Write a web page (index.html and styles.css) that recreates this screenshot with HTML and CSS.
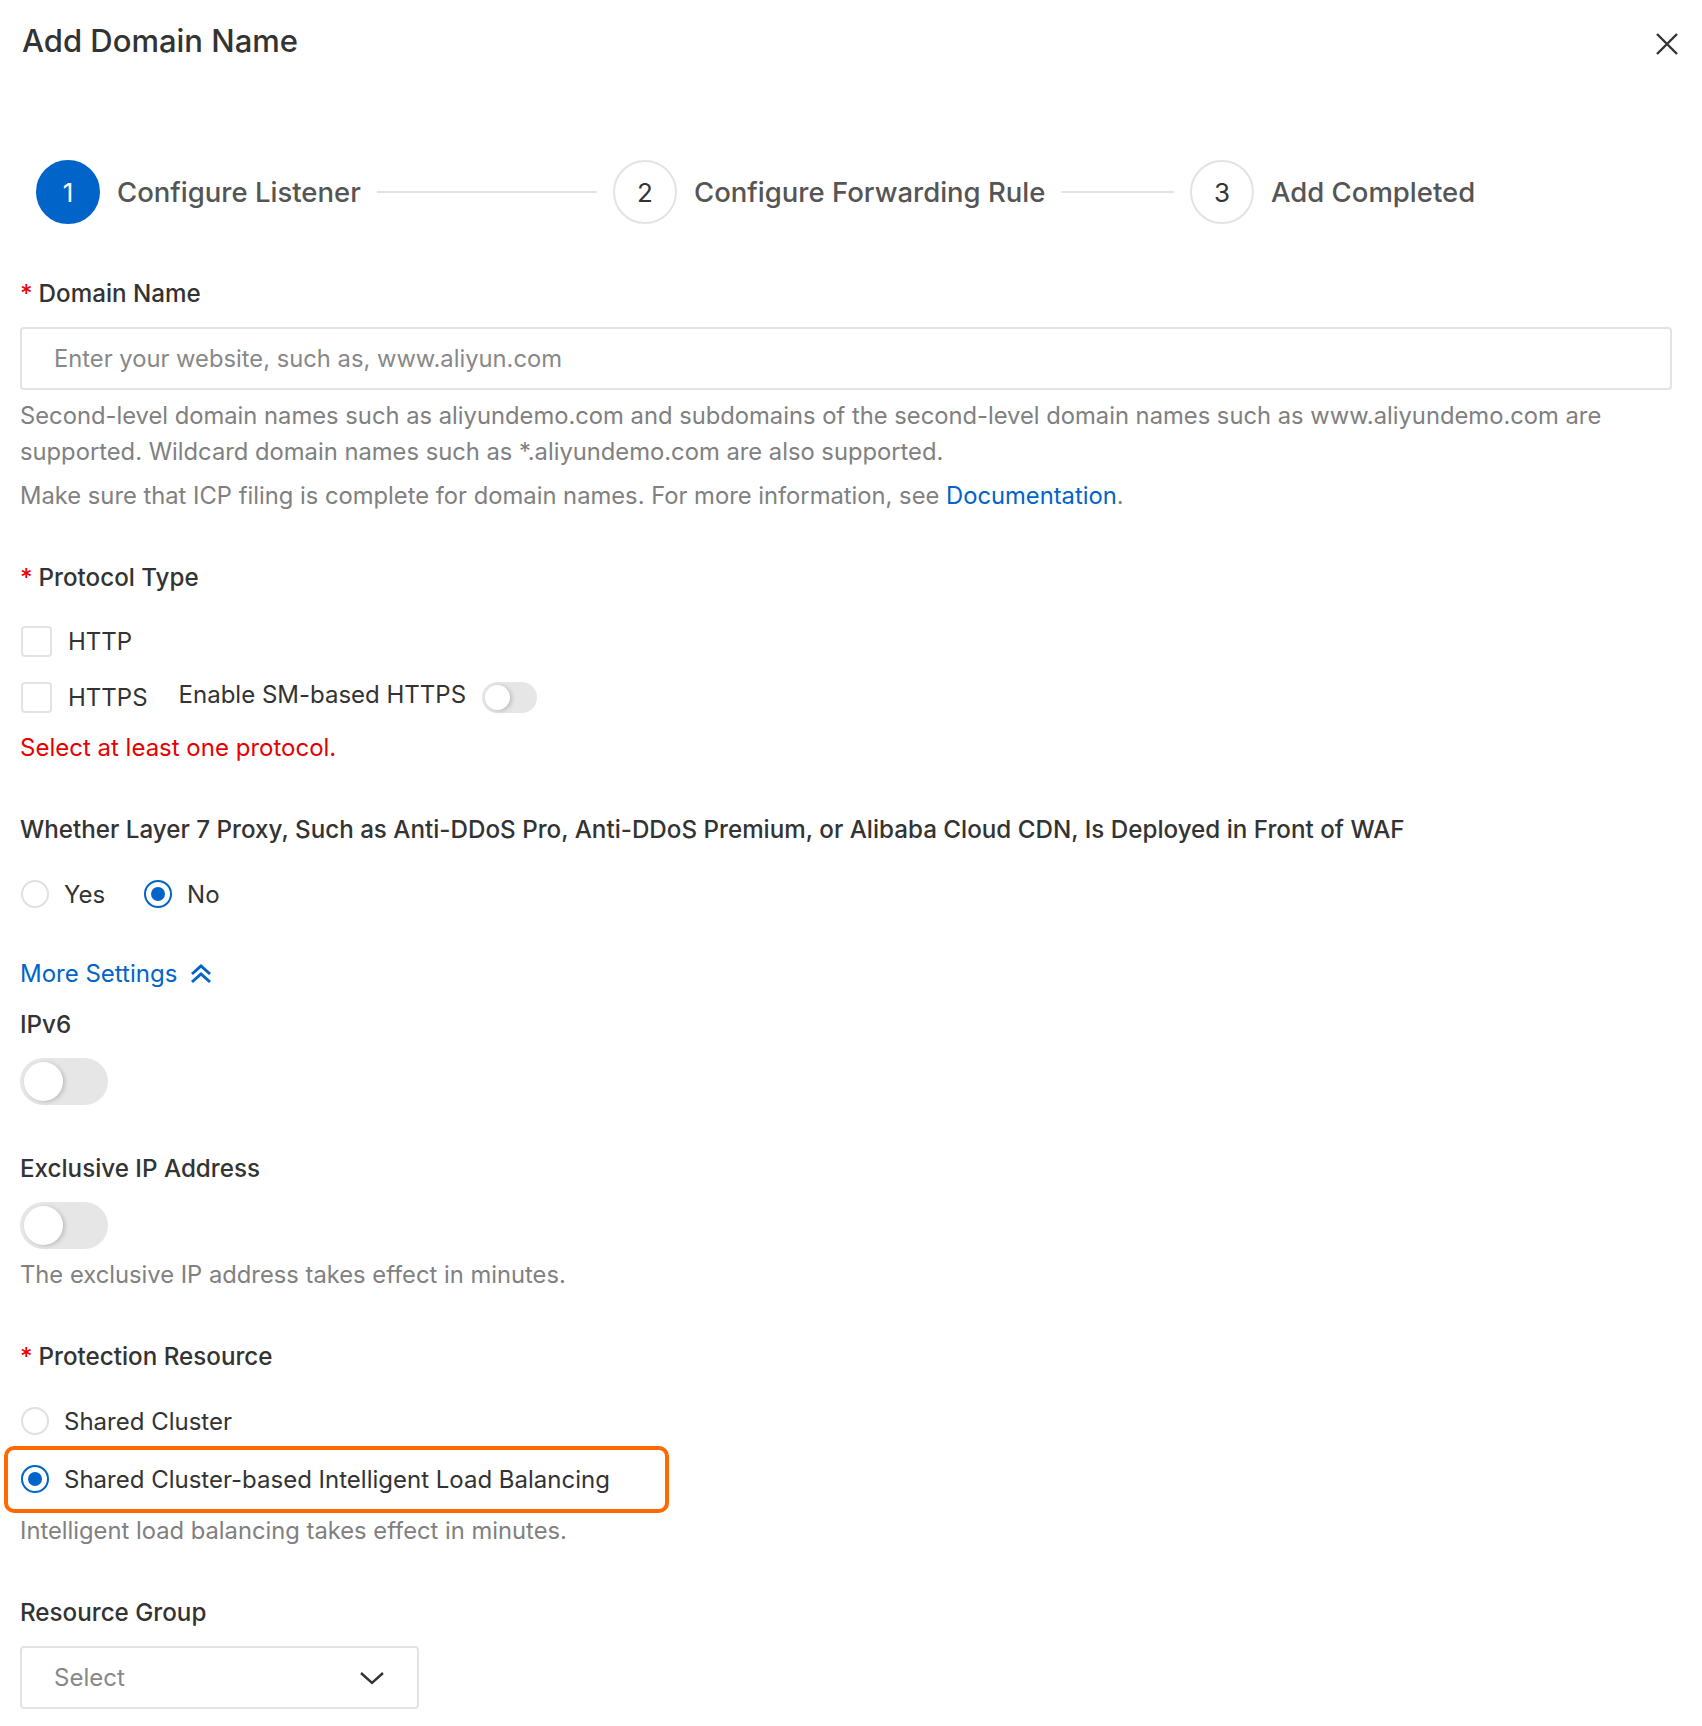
FILE: index.html
```html
<!DOCTYPE html>
<html lang="en">
<head>
    <meta charset="UTF-8">
    <meta name="viewport" content="width=device-width, initial-scale=1.0">
    <title>Add Domain Name</title>
    <link rel="stylesheet" href="styles.css">
</head>
<body>
    <div class="dialog">
        <div class="dialog-head">
            <h1>Add Domain Name</h1>
            <button class="close-btn" type="button" aria-label="Close">
                <svg width="24" height="24" viewBox="0 0 24 24"><path d="M2 2L22 22M22 2L2 22" stroke="#333" stroke-width="2.4" fill="none"/></svg>
            </button>
        </div>

        <div class="steps">
            <div class="step active">
                <span class="step-num">1</span>
                <span class="step-title">Configure Listener</span>
                <span class="step-line"></span>
            </div>
            <div class="step">
                <span class="step-num">2</span>
                <span class="step-title">Configure Forwarding Rule</span>
                <span class="step-line"></span>
            </div>
            <div class="step">
                <span class="step-num">3</span>
                <span class="step-title">Add Completed</span>
            </div>
        </div>

        <form class="form">
            <div class="form-item">
                <label class="form-label required" for="domain">Domain Name</label>
                <input class="text-input" type="text" id="domain" placeholder="Enter your website, such as, www.aliyun.com">
                <p class="help">Second-level domain names such as aliyundemo.com and subdomains of the second-level domain names such as www.aliyundemo.com are supported. Wildcard domain names such as *.aliyundemo.com are also supported.</p>
                <p class="help">Make sure that ICP filing is complete for domain names. For more information, see <a href="#">Documentation</a>.</p>
            </div>

            <div class="form-item">
                <div class="form-label required">Protocol Type</div>
                <div class="check-group">
                    <div class="check-row">
                        <span class="check-box"></span>HTTP
                    </div>
                    <div class="check-row">
                        <span class="check-box"></span>HTTPS
                        <span class="sm-label">Enable SM-based HTTPS</span>
                        <span class="switch small"></span>
                    </div>
                </div>
                <p class="error">Select at least one protocol.</p>
            </div>

            <div class="form-item tight">
                <div class="form-label">Whether Layer 7 Proxy, Such as Anti-DDoS Pro, Anti-DDoS Premium, or Alibaba Cloud CDN, Is Deployed in Front of WAF</div>
                <div class="radio-group inline">
                    <div class="radio"><span class="radio-dot"></span>Yes</div>
                    <div class="radio"><span class="radio-dot checked"></span>No</div>
                </div>
            </div>

            <a class="more-link" href="#">More Settings
                <svg width="24" height="22" viewBox="0 0 24 22"><path d="M3 11L12 3L21 11M3 19L12 11L21 19" stroke="#0064c8" stroke-width="3" fill="none"/></svg>
            </a>

            <div class="form-item">
                <div class="form-label">IPv6</div>
                <span class="switch"></span>
            </div>

            <div class="form-item">
                <div class="form-label">Exclusive IP Address</div>
                <span class="switch"></span>
                <p class="help">The exclusive IP address takes effect in minutes.</p>
            </div>

            <div class="form-item">
                <div class="form-label required">Protection Resource</div>
                <div class="radio-group">
                    <div class="radio"><span class="radio-dot"></span>Shared Cluster</div>
                    <div class="highlight">
                        <div class="radio"><span class="radio-dot checked"></span>Shared Cluster-based Intelligent Load Balancing</div>
                    </div>
                </div>
                <p class="help flush">Intelligent load balancing takes effect in minutes.</p>
            </div>

            <div class="form-item last">
                <div class="form-label">Resource Group</div>
                <div class="select">
                    <span>Select</span>
                    <svg width="26" height="14" viewBox="0 0 26 14"><path d="M2 2L13 12L24 2" stroke="#333" stroke-width="2.4" fill="none"/></svg>
                </div>
            </div>
        </form>
    </div>
</body>
</html>
```

FILE: styles.css
```css
* {
    box-sizing: border-box;
    margin: 0;
    padding: 0;
    font-family: Inter, "Liberation Sans", sans-serif;
}

body {
    background-color: #fff;
    color: #333;
}

.dialog {
    padding: 21px 30px 16px 20px;
}

.dialog-head {
    display: flex;
    justify-content: space-between;
    align-items: center;
    height: 40px;
    padding-left: 2px;
}

h1 {
    font-size: 31px;
    font-weight: 500;
    line-height: 40px;
    color: #333;
}

.close-btn {
    width: 24px;
    height: 24px;
    margin-top: 6px;
    margin-right: -7px;
    border: none;
    background: none;
    cursor: pointer;
}

/* steps */
.steps {
    display: flex;
    align-items: center;
    margin-top: 99px;
    padding-left: 16px;
}

.step {
    display: flex;
    align-items: center;
    flex: none;
    width: 577px;
}

.step:last-child {
    width: auto;
}

.step-num {
    display: flex;
    align-items: center;
    justify-content: center;
    flex: none;
    width: 64px;
    height: 64px;
    border: 2px solid #e3e3e3;
    border-radius: 50%;
    font-size: 26px;
    color: #333;
}

.step.active .step-num {
    background-color: #0064c8;
    border-color: #0064c8;
    color: #fff;
}

.step-title {
    margin-left: 17px;
    font-size: 27.5px;
    font-weight: 500;
    color: #555;
    white-space: nowrap;
}

.step-line {
    flex: 1;
    height: 2px;
    margin: 0 16px;
    background-color: #e3e3e3;
}

/* form */
.form {
    margin-top: 52px;
}

.form-item {
    margin-bottom: 46px;
}

.form-item.tight {
    margin-bottom: 44px;
}

.form-item.last {
    margin-bottom: 0;
}

.form-label {
    display: block;
    margin-bottom: 15px;
    font-size: 24.2px;
    font-weight: 500;
    line-height: 36px;
    color: #333;
}

.required::before {
    content: "*";
    margin-right: 6px;
    color: #e00;
}

.text-input {
    display: block;
    width: 100%;
    height: 63px;
    margin-bottom: 8px;
    padding: 0 32px;
    border: 2px solid #e3e3e3;
    border-radius: 4px;
    font-size: 23.75px;
    color: #333;
}

.text-input::placeholder {
    color: #888;
}

.help {
    font-size: 23.75px;
    line-height: 36px;
    color: #808080;
}

.help + .help {
    margin-top: 8px;
}

.switch + .help {
    margin-top: 8px;
}

.help a {
    color: #0064c8;
    text-decoration: none;
}

.check-group {
    display: flex;
    flex-direction: column;
    gap: 20px;
    padding-top: 12px;
}

.check-row {
    display: flex;
    align-items: center;
    height: 36px;
    font-size: 24px;
    color: #333;
}

.check-box {
    width: 31px;
    height: 31px;
    margin: 0 16px 0 1px;
    border: 2px solid #e3e3e3;
    border-radius: 4px;
}

.sm-label {
    margin-left: 31px;
    margin-right: 16px;
    margin-top: -5px;
}

.error {
    margin-top: 15px;
    font-size: 24px;
    line-height: 36px;
    color: #e60000;
}

/* radios */
.radio-group {
    padding-top: 13px;
}

.radio-group.inline {
    display: flex;
    gap: 38px;
}

.radio {
    display: flex;
    align-items: center;
    height: 36px;
    font-size: 24px;
    color: #333;
}

.radio-dot {
    position: relative;
    width: 28px;
    height: 28px;
    margin: 0 15px 0 1px;
    border: 2px solid #e0e0e0;
    border-radius: 50%;
}

.radio-dot.checked {
    border-color: #0064c8;
}

.radio-dot.checked::after {
    content: "";
    position: absolute;
    top: 5px;
    left: 5px;
    width: 14px;
    height: 14px;
    border-radius: 50%;
    background-color: #0064c8;
}

.highlight {
    width: 665px;
    margin: 7px 0 0 -16px;
    padding: 11px 12px 12px;
    border: 4px solid #ff6a00;
    border-radius: 10px;
}

.help.flush {
    margin-top: 0;
}

.more-link {
    display: flex;
    align-items: center;
    gap: 12px;
    width: max-content;
    margin-bottom: 15px;
    font-size: 24px;
    line-height: 36px;
    color: #0064c8;
    text-decoration: none;
}

/* switch */
.switch {
    display: block;
    position: relative;
    width: 88px;
    height: 47px;
    border-radius: 24px;
    background-color: #e6e6e6;
}

.switch::after {
    content: "";
    position: absolute;
    top: 4px;
    left: 4px;
    width: 39px;
    height: 39px;
    border-radius: 50%;
    background-color: #fff;
    box-shadow: 2px 1px 4px rgba(0, 0, 0, 0.18);
}

.switch.small {
    width: 55px;
    height: 31px;
    border-radius: 16px;
}

.switch.small::after {
    top: 3px;
    left: 3px;
    width: 25px;
    height: 25px;
}

/* select */
.select {
    display: flex;
    align-items: center;
    justify-content: space-between;
    width: 399px;
    height: 63px;
    padding: 0 32px;
    border: 2px solid #e3e3e3;
    border-radius: 4px;
    font-size: 24px;
    color: #888;
}
```
